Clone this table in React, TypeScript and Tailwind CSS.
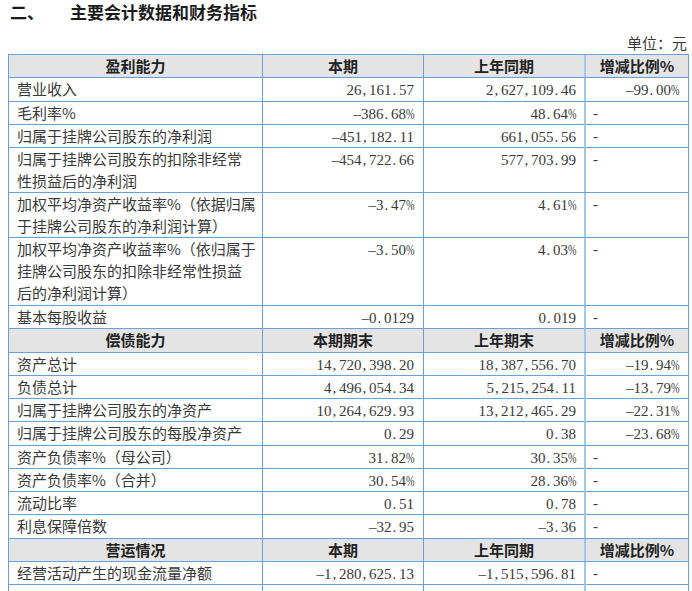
import React from "react";

type DataRow = { kind: "data"; label: string[]; cur: string; prev: string; change: string };
type HeadRow = { kind: "head"; cols: [string, string, string, string] };
type Row = DataRow | HeadRow;

const rows: Row[] = [
  { kind: "head", cols: ["盈利能力", "本期", "上年同期", "增减比例%"] },
  { kind: "data", label: ["营业收入"], cur: "26,161.57", prev: "2,627,109.46", change: "-99.00%" },
  { kind: "data", label: ["毛利率%"], cur: "-386.68%", prev: "48.64%", change: "" },
  { kind: "data", label: ["归属于挂牌公司股东的净利润"], cur: "-451,182.11", prev: "661,055.56", change: "" },
  {
    kind: "data",
    label: ["归属于挂牌公司股东的扣除非经常", "性损益后的净利润"],
    cur: "-454,722.66",
    prev: "577,703.99",
    change: "",
  },
  {
    kind: "data",
    label: ["加权平均净资产收益率%（依据归属", "于挂牌公司股东的净利润计算）"],
    cur: "-3.47%",
    prev: "4.61%",
    change: "",
  },
  {
    kind: "data",
    label: ["加权平均净资产收益率%（依归属于", "挂牌公司股东的扣除非经常性损益", "后的净利润计算）"],
    cur: "-3.50%",
    prev: "4.03%",
    change: "",
  },
  { kind: "data", label: ["基本每股收益"], cur: "-0.0129", prev: "0.019", change: "" },
  { kind: "head", cols: ["偿债能力", "本期期末", "上年期末", "增减比例%"] },
  { kind: "data", label: ["资产总计"], cur: "14,720,398.20", prev: "18,387,556.70", change: "-19.94%" },
  { kind: "data", label: ["负债总计"], cur: "4,496,054.34", prev: "5,215,254.11", change: "-13.79%" },
  { kind: "data", label: ["归属于挂牌公司股东的净资产"], cur: "10,264,629.93", prev: "13,212,465.29", change: "-22.31%" },
  { kind: "data", label: ["归属于挂牌公司股东的每股净资产"], cur: "0.29", prev: "0.38", change: "-23.68%" },
  { kind: "data", label: ["资产负债率%（母公司）"], cur: "31.82%", prev: "30.35%", change: "" },
  { kind: "data", label: ["资产负债率%（合并）"], cur: "30.54%", prev: "28.36%", change: "" },
  { kind: "data", label: ["流动比率"], cur: "0.51", prev: "0.78", change: "" },
  { kind: "data", label: ["利息保障倍数"], cur: "-32.95", prev: "-3.36", change: "" },
  { kind: "head", cols: ["营运情况", "本期", "上年同期", "增减比例%"] },
  { kind: "data", label: ["经营活动产生的现金流量净额"], cur: "-1,280,625.13", prev: "-1,515,596.81", change: "" },
];

// row height by number of text lines
const heights: Record<number, string> = {
  1: "h-[23.25px]",
  2: "h-[45px]",
  3: "h-[68px]",
};

const cjk = "font-['Noto_Sans_CJK_SC',sans-serif]";

// half-width numerals like the Song typeface in the source report
const Num = ({ v }: { v: string }) => (
  <span className="font-['Liberation_Serif',serif] whitespace-nowrap">
    {v.split("").map((c, i) => {
      if (/\d/.test(c)) return <span key={i}>{c}</span>;
      if (c === "-")
        return (
          <span key={i} className="inline-block w-[7.5px] text-center">
            –
          </span>
        );
      if (c === "%")
        return (
          <span key={i} className="inline-block w-[8px]">
            <span className="inline-block origin-left scale-x-[0.68]">%</span>
          </span>
        );
      return (
        <span key={i} className="inline-block w-[7.5px] pl-[1px] text-left">
          {c}
        </span>
      );
    })}
  </span>
);

const grid = "grid grid-cols-[254px_161px_162px_102px] border-b border-[#6a9fd8]";

const App: React.FC = () => {
  return (
    <div className={`w-[692px] bg-white pl-[8px] text-[15px] text-[#3a3a3a] ${cjk}`}>
      <div className="flex pt-[1px] pl-[2px] text-[17px] font-bold leading-[22px] text-[#1c1c1c]">
        <span className="w-[60px]">二、</span>
        <span>主要会计数据和财务指标</span>
      </div>
      <div className="mt-[9px] h-[22px] w-[681px] pr-[2px] text-right leading-[22px]">单位：元</div>
      <div className="w-[681px] border border-b-0 border-[#6a9fd8]">
        {rows.map((r, idx) => {
          if (r.kind === "head") {
            return (
              <div key={idx} className={`${grid} ${heights[1]} bg-[#e4e4e4] font-bold leading-[22px] text-[#222]`}>
                <div className="border-r border-[#6a9fd8] text-center">{r.cols[0]}</div>
                <div className="border-r border-[#6a9fd8] text-center">{r.cols[1]}</div>
                <div className="border-r-2 border-[#a4c6ec] text-center">{r.cols[2]}</div>
                <div className="text-center">{r.cols[3]}</div>
              </div>
            );
          }
          return (
            <div key={idx} className={`${grid} ${heights[r.label.length]} leading-[22px]`}>
              <div className="whitespace-nowrap border-r border-[#6a9fd8] pl-[8px]">
                {r.label.map((l, i) => (
                  <div key={i}>{l}</div>
                ))}
              </div>
              <div className="border-r border-[#6a9fd8] pr-[9px] text-right">
                <Num v={r.cur} />
              </div>
              <div className="border-r-2 border-[#a4c6ec] pr-[8px] text-right">
                <Num v={r.prev} />
              </div>
              {r.change ? (
                <div className="pr-[9px] text-right">
                  <Num v={r.change} />
                </div>
              ) : (
                <div className="pl-[7px] font-['Liberation_Serif',serif]">-</div>
              )}
            </div>
          );
        })}
        <div className={`${grid} h-[23.25px]`}>
          <div className="border-r border-[#6a9fd8]" />
          <div className="border-r border-[#6a9fd8]" />
          <div className="border-r-2 border-[#a4c6ec]" />
          <div />
        </div>
      </div>
    </div>
  );
};

export default App;
